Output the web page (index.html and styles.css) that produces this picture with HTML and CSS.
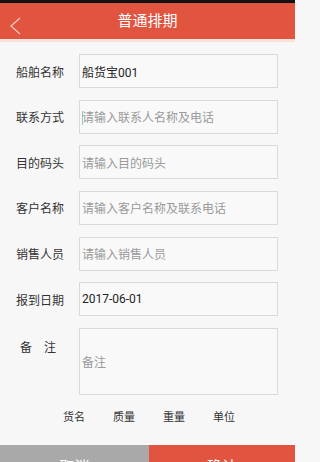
FILE: index.html
```html
<!DOCTYPE html>
<html lang="zh-CN">
<head>
<meta charset="utf-8">
<title>普通排期</title>
<link rel="stylesheet" href="styles.css">
</head>
<body>
<div class="page">
<div class="status"></div>
<header class="topbar">
  <svg class="back" width="14" height="20" viewBox="0 0 14 20"><path d="M11 2 L2 10 L11 18" fill="none" stroke="#f6c9bf" stroke-width="1.3"/></svg>
  <h1 class="title">普通排期</h1>
</header>
<main class="form">
  <div class="row"><span class="label">船舶名称</span><div class="field value">船货宝001</div></div>
  <div class="row"><span class="label">联系方式</span><div class="field hint"><span class="caret"></span>请输入联系人名称及电话</div></div>
  <div class="row"><span class="label">目的码头</span><div class="field hint">请输入目的码头</div></div>
  <div class="row"><span class="label">客户名称</span><div class="field hint">请输入客户名称及联系电话</div></div>
  <div class="row"><span class="label">销售人员</span><div class="field hint">请输入销售人员</div></div>
  <div class="row"><span class="label">报到日期</span><div class="field value">2017-06-01</div></div>
  <div class="row row-tall"><span class="label label-note"><span>备</span><span>注</span></span><div class="field area hint">备注</div></div>
</main>
<div class="cols"><span>货名</span><span>质量</span><span>重量</span><span>单位</span></div>
<footer class="actions"><div class="btn btn-cancel">取消</div><div class="btn btn-ok">确认</div></footer>
</div>
</body>
</html>
```
FILE: styles.css
```css
html, body {
  margin: 0;
  padding: 0;
}
html {
  background: #f7f7f7;
}
body {
  font-family: Roboto, "Noto Sans CJK SC", sans-serif;
  color: #333;
}
.page {
  width: 295px;
  height: 462px;
  overflow: hidden;
  background: #f7f7f7;
}
.status {
  height: 3px;
  background: #111;
}
.topbar {
  height: 36px;
  background: #e1543f;
  border-bottom: 3px solid #f7e2dc;
  display: flex;
  align-items: center;
  justify-content: center;
  position: relative;
}
.back {
  position: absolute;
  left: 9px;
  top: 13px;
}
.title {
  margin: 0;
  font-size: 15px;
  font-weight: normal;
  color: #fff;
  line-height: 36px;
}
.form {
  padding: 12px 17px 0 16px;
  display: flex;
  flex-direction: column;
  gap: 11.67px;
}
.row {
  display: flex;
  align-items: center;
  height: 34px;
}
.row-tall {
  height: 67px;
  align-items: flex-start;
}
.label {
  width: 63px;
  flex: none;
  font-size: 12px;
  color: #333;
}
.label-note {
  display: flex;
  gap: 12px;
  padding: 10px 0 0 4px;
  width: 59px;
}
.field {
  flex: 1;
  height: 100%;
  box-sizing: border-box;
  border: 1px solid #dadada;
  background: #f9f9f9;
  box-shadow: inset 0 0 1px #eee;
  display: flex;
  align-items: center;
  padding-left: 2px;
  font-size: 12px;
  position: relative;
}
.value {
  color: #222;
}
.hint {
  color: #9a9a9a;
}
.area {
  height: 67px;
}
.caret {
  position: absolute;
  left: 2px;
  top: 10px;
  width: 1px;
  height: 14px;
  background: #8fc7cf;
}
.cols {
  display: flex;
  gap: 28px;
  padding-left: 63px;
  margin-top: 15px;
  font-size: 11px;
  line-height: 16px;
  color: #333;
}
.actions {
  display: flex;
  margin-top: 19px;
  height: 42px;
}
.btn {
  display: flex;
  justify-content: center;
  align-items: center;
  font-size: 15px;
  color: #fff;
  height: 42px;
}
.btn-cancel {
  width: 149px;
  background: #a9a9a9;
}
.btn-ok {
  flex: 1;
  background: #e1543f;
}
```
